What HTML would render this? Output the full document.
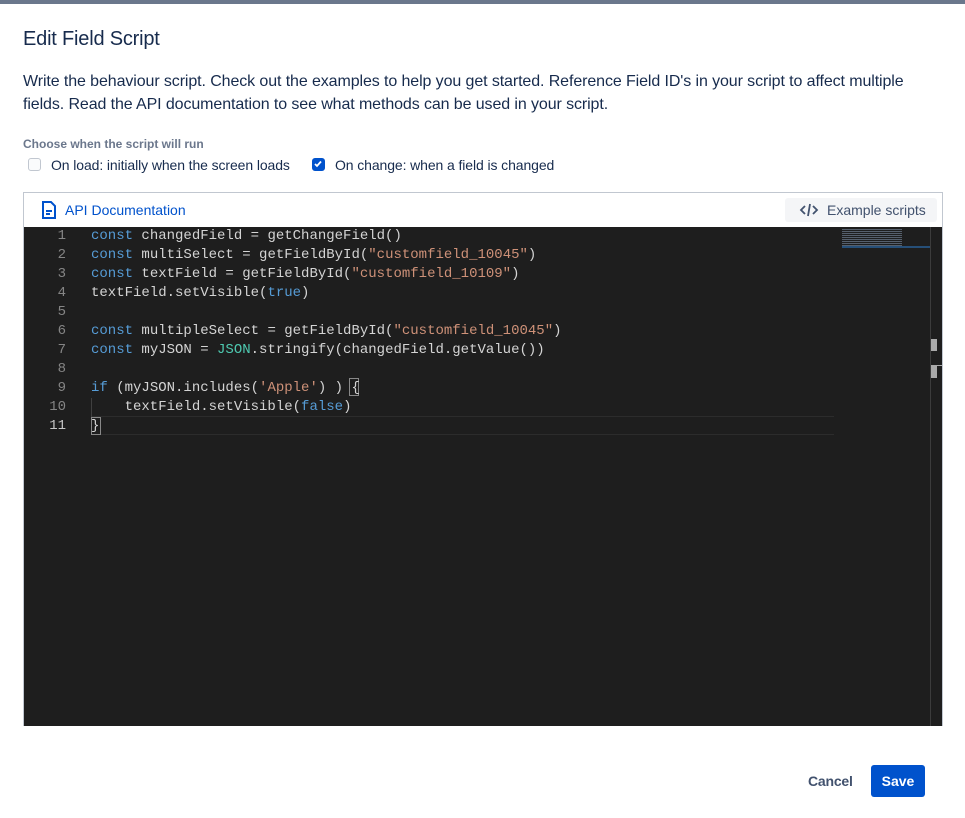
<!DOCTYPE html>
<html><head><meta charset="utf-8">
<style>
*{margin:0;padding:0;box-sizing:border-box}
body{width:965px;height:818px;background:#fff;font-family:"Liberation Sans",sans-serif;color:#172b4d;position:relative;overflow:hidden}
.top{position:absolute;left:0;top:0;width:965px;height:4px;background:#6b778c}
h1{position:absolute;left:23px;top:28px;font-size:20px;font-weight:normal;color:#172b4d;letter-spacing:-0.2px}
.desc{position:absolute;left:23px;top:70px;width:920px;font-size:16px;line-height:23px;color:#172b4d;letter-spacing:-0.1px}
.lbl{position:absolute;left:23px;top:137px;font-size:12px;font-weight:bold;color:#6b778c}
.cb{position:absolute;top:158px;width:13px;height:13px;border:1.5px solid #c1c7d0;border-radius:3px;background:#fafbfc}
.cb.on{background:#0052cc;border-color:#0052cc}
.cbt{position:absolute;top:157px;font-size:14px;color:#172b4d;letter-spacing:-0.1px}
.ed{position:absolute;left:23px;top:192px;width:920px;height:534px;border:1px solid #c1c7d0}
.bar{height:34px;background:#fff;position:relative}
.api{position:absolute;left:17px;top:8px;font-size:14px;color:#0052cc;display:flex;align-items:center;gap:8px}
.ex{position:absolute;right:5px;top:5px;width:152px;height:24px;background:#f4f5f7;border-radius:3px;font-size:14px;color:#42526e;display:flex;align-items:center;padding-left:14px;gap:8px}
.code{position:absolute;left:0;top:34px;width:918px;height:499px;background:#1e1e1e;font-family:"Liberation Mono",monospace;font-size:14px}
.ln{position:absolute;left:0;width:42px;text-align:right;color:#858585}
.tx{position:absolute;left:67px;color:#d4d4d4;white-space:pre}
.k{color:#569cd6}.s{color:#ce9178}.j{color:#4ec9b0}
.cur{position:absolute;left:67px;top:189px;width:743px;height:19px;border-top:1px solid #2c2c2c;border-bottom:1px solid #2c2c2c}
.sb{position:absolute;left:906px;top:0;width:1px;height:499px;background:#3c3c3c}
.btn{position:absolute;font-size:14px;font-weight:bold}
</style></head><body>
<div class="top"></div>
<h1>Edit Field Script</h1>
<div class="desc">Write the behaviour script. Check out the examples to help you get started. Reference Field ID's in your script to affect multiple fields. Read the API documentation to see what methods can be used in your script.</div>
<div class="lbl">Choose when the script will run</div>
<div class="cb" style="left:28px"></div><div class="cbt" style="left:51px">On load: initially when the screen loads</div>
<div class="cb on" style="left:312px"><svg width="10" height="10" viewBox="0 0 10 10" style="position:absolute;left:0;top:0"><path d="M2 5l2 2 4-4.5" stroke="#fff" stroke-width="1.8" fill="none"/></svg></div><div class="cbt" style="left:335px">On change: when a field is changed</div>
<div class="ed">
<div class="bar">
<div class="api"><svg width="16" height="18" viewBox="0 0 16 18"><path d="M2 1h8l4 4v12H2z" fill="none" stroke="#0052cc" stroke-width="2"/><path d="M5 10h6M5 13h4" stroke="#0052cc" stroke-width="2"/></svg>API Documentation</div>
<div class="ex"><svg width="20" height="16" viewBox="0 0 20 16"><path d="M6 4L2 8l4 4M14 4l4 4-4 4M11 2L9 14" stroke="#42526e" stroke-width="1.8" fill="none"/></svg>Example scripts</div>
</div>
<div class="code">
<div class="cur"></div>
<div style="position:absolute;left:67px;top:171px;width:1px;height:19px;background:#404040"></div>
<div style="position:absolute;left:325px;top:151px;width:10px;height:18px;border:1px solid #888"></div>
<div style="position:absolute;left:67px;top:190px;width:10px;height:18px;border:1px solid #888"></div>
<div class="ln" style="top:0;line-height:19px">1<br>2<br>3<br>4<br>5<br>6<br>7<br>8<br>9<br>10<br><span style="color:#c6c6c6">11</span></div>
<div class="tx" style="top:0;line-height:19px"><span class="k">const</span> changedField = getChangeField()
<span class="k">const</span> multiSelect = getFieldById(<span class="s">"customfield_10045"</span>)
<span class="k">const</span> textField = getFieldById(<span class="s">"customfield_10109"</span>)
textField.setVisible(<span class="k">true</span>)

<span class="k">const</span> multipleSelect = getFieldById(<span class="s">"customfield_10045"</span>)
<span class="k">const</span> myJSON = <span class="j">JSON</span>.stringify(changedField.getValue())

<span class="k">if</span> (myJSON.includes(<span class="s">'Apple'</span>) ) {
    textField.setVisible(<span class="k">false</span>)
}</div>
<div style="position:absolute;left:818px;top:2px;width:60px;height:18px;opacity:.6;background:repeating-linear-gradient(#7a8aa0 0 1px,transparent 1px 2px)"></div>
<div style="position:absolute;left:818px;top:19px;width:88px;height:2px;background:#264f78"></div>
<div class="sb"></div>
<div style="position:absolute;left:907px;top:112px;width:6px;height:12px;background:#aaa"></div>
<div style="position:absolute;left:907px;top:138px;width:11px;height:1px;background:#aaa"></div>
<div style="position:absolute;left:907px;top:138px;width:6px;height:13px;background:#aaa"></div>
</div>
</div>
<div class="btn" style="left:808px;top:773px;color:#42526e;letter-spacing:-0.2px">Cancel</div>
<div class="btn" style="left:871px;top:765px;width:54px;height:32px;background:#0052cc;color:#fff;border-radius:3px;text-align:center;line-height:32px">Save</div>
</body></html>
